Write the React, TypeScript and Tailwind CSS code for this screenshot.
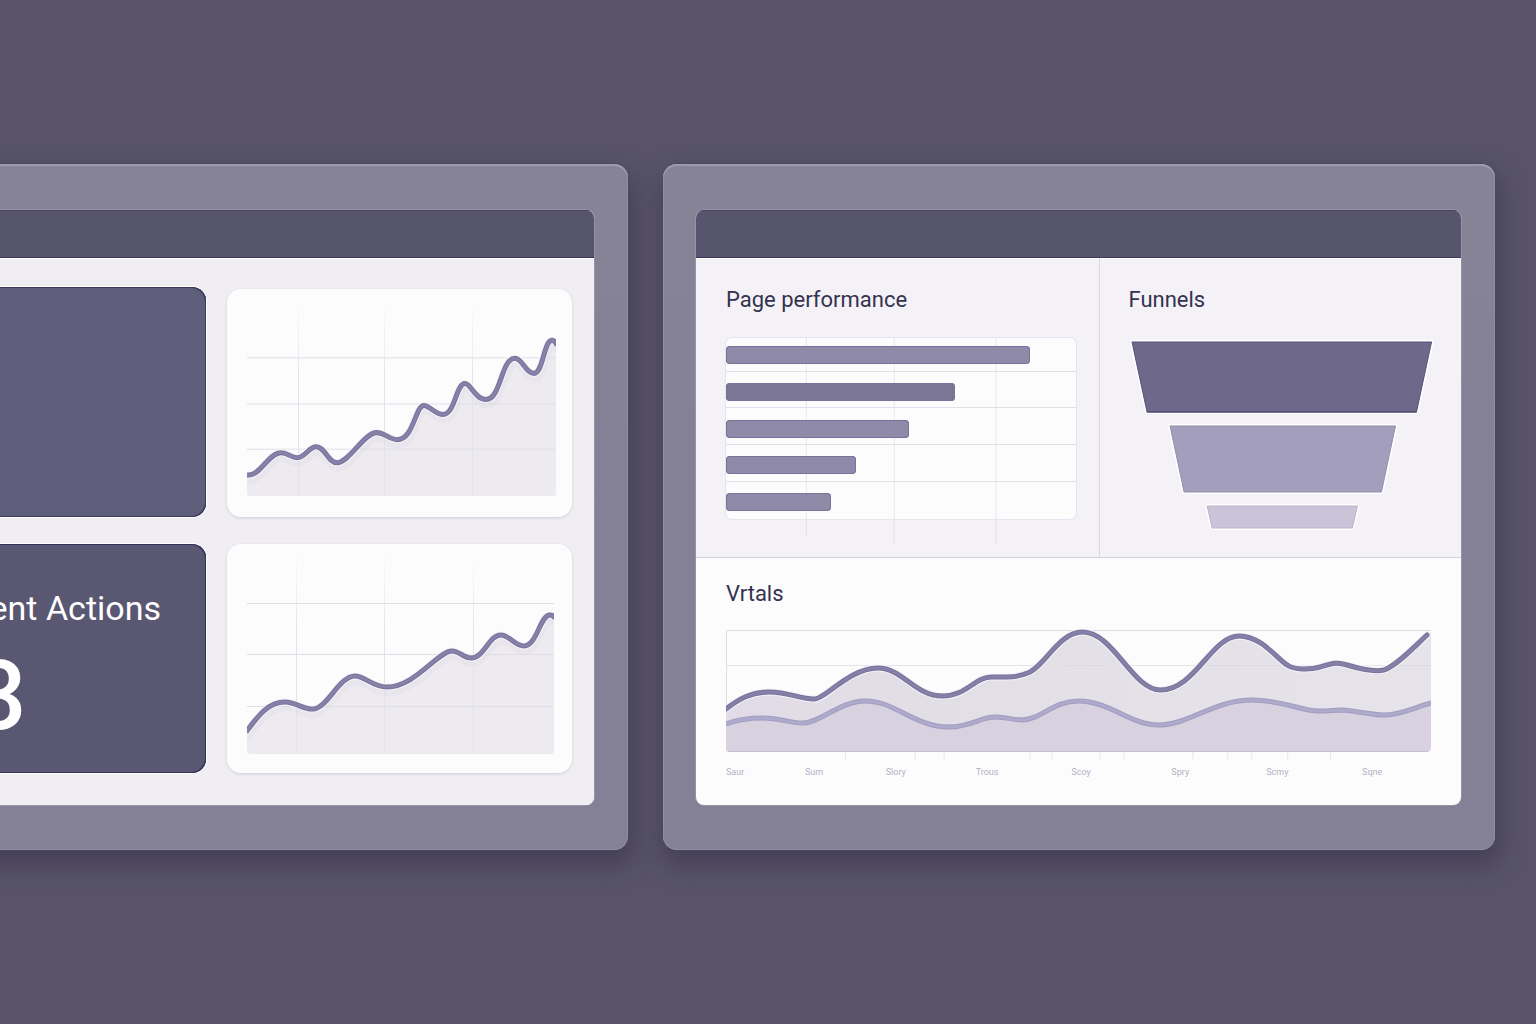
import type { ReactNode } from "react";

function Frame({ cut, children }: { cut?: boolean; children: ReactNode }) {
  return (
    <section
      className={
        (cut ? "-ml-10 rounded-r-[14px] pr-[34px] pl-10" : "rounded-[14px] pr-[34px] pl-[33px]") +
        " min-w-0 bg-linear-to-b from-[#878397] via-[#848095] to-[#848196] pt-[46px] pb-[45px] shadow-[inset_0_2px_1px_#9f9bae,inset_0_0_0_1px_#8f8ba2,0_0_0_1px_#4b475f,2px_12px_24px_2px_rgba(47,42,66,0.5)]"
      }
    >
      <div
        className={
          (cut ? "rounded-r-lg" : "rounded-lg") +
          " flex h-full flex-col overflow-hidden bg-[#fdfcfd] shadow-[0_0_0_1px_#9792aa]"
        }
      >
        <div className="h-12 shrink-0 border-t border-b border-t-[#47435f] border-b-[#3a365c] bg-[#57546d]" />
        {children}
      </div>
    </section>
  );
}

type TrendProps = {
  label: string;
  box: string;
  line: string;
  area: string;
  rows: number[];
  cols: number[];
  clip: { x: number; y: number; w: number; h: number };
};

function TrendCard({ label, box, line, area, rows, cols, clip }: TrendProps) {
  const id = label.replace(" ", "-");
  return (
    <div className="min-h-0 rounded-[14px] bg-[#fdfcfd] shadow-[0_1px_3px_rgba(80,70,110,0.18)]">
      <svg viewBox={box} preserveAspectRatio="none" className="block h-full w-full" role="img" aria-label={label}>
        <defs>
          <clipPath id={id}>
            <rect x={clip.x} y={clip.y} width={clip.w} height={clip.h} rx="3" />
          </clipPath>
          <linearGradient id={id + "-fade"} gradientUnits="userSpaceOnUse" x1="0" y1={clip.y} x2="0" y2={clip.y + 80}>
            <stop offset="0" stopColor="#e6e5ee" stopOpacity="0" />
            <stop offset="1" stopColor="#e3e2eb" />
          </linearGradient>
        </defs>
        <g clipPath={`url(#${id})`}>
          <path d={area} fill="#edeaf0" />
          {rows.map((y) => (
            <rect key={y} x={clip.x} y={y} width={clip.w} height="1" fill="#e0dfe9" />
          ))}
          {cols.map((x) => (
            <rect key={x} x={x} y={clip.y} width="1" height={clip.h} fill={`url(#${id}-fade)`} />
          ))}
          <path d={line} fill="none" stroke="#c9bfd2" strokeOpacity="0.1" strokeWidth="8" transform="translate(1 5)" />
          <path d={line} fill="none" stroke="#f6f4f8" strokeWidth="7" />
          <path d={line} fill="none" stroke="#78749c" strokeWidth="5" />
          <path d={line} fill="none" stroke="#8581a8" strokeWidth="3" />
        </g>
      </svg>
    </div>
  );
}

const LINE_A =
  "M246 475 C260 478 268 453 281 453 C288 453 291 458 297 458 C305 458 309 447 316 447 C325 447 328 463 337 463 C349 463 364 433 377 433 C384 433 390 440 397 440 C414 440 415 406 424 406 C429 406 436 415 443 415 C455 415 456 384 465 384 C471 384 475 400 486 400 C501 400 501 359 515 359 C522 359 526 374 534 374 C543 374 544 341 552 341 C555 341 555 343 557 346";
const LINE_B =
  "M245 732 C257 716 267 702 284 702 C295 702 303 710 312 709 C326 709 338 676 354 676 C364 676 371 687 386 687 C414 687 437 651 451 651 C458 651 463 658 470 658 C483 658 488 635 500 635 C508 635 514 646 523 646 C536 646 539 615 549 615 C552 615 552 616 554 618";

const BARS = [
  { width: 304, color: "bg-[#8e8aa8]" },
  { width: 229, color: "bg-[#7a7693]" },
  { width: 183, color: "bg-[#8e8aa8]" },
  { width: 130, color: "bg-[#8e8aa8]" },
  { width: 105, color: "bg-[#8e8aa8]" },
];

const UPPER =
  "M725 709 C738 699 750 692 768 692 C788 692 802 700 814 699 C824 699 849 668 877 668 C902 668 914 696 942 696 C966 696 974 677 991 677 C1003 677 1016 678 1027 673 C1044 667 1058 632 1082 632 C1113 632 1132 690 1160 690 C1195 690 1211 636 1239 636 C1261 636 1277 659 1287 665 C1294 670 1310 670 1320 667 C1334 663 1337 662 1347 665 C1360 669 1374 672 1384 670 C1396 666 1414 647 1427 635";
const LOWER =
  "M725 724 C738 719 749 718 762 718 C780 718 787 723 802 723 C820 723 838 701 865 701 C894 701 914 727 948 727 C971 727 979 717 995 717 C1007 717 1012 720 1021 720 C1040 720 1052 701 1078 701 C1109 701 1130 725 1158 725 C1189 725 1213 700 1252 700 C1283 700 1301 711 1318 711 C1330 711 1333 710 1342 710 C1356 711 1372 715 1384 715 C1400 715 1413 708 1431 703";

const TICKS = [844, 914, 943, 1029, 1051, 1099, 1123, 1192, 1227, 1251, 1287, 1330];
const LABELS = ["Saur", "Sum", "Slory", "Trous", "Scoy", "Spry", "Scmy", "Sqne"];

function Title({ children }: { children: ReactNode }) {
  return <h2 className="text-[22px] leading-8 text-[#343250]">{children}</h2>;
}

export default function App() {
  return (
    <main className="grid min-h-screen grid-cols-[628fr_832fr] content-start gap-[35px] overflow-hidden bg-[#585369] pt-[164px] pr-[41px] pb-20 font-['Roboto',sans-serif]">
      <Frame cut>
        <div className="grid grow grid-cols-[206fr_345fr] grid-rows-[230px_229px] gap-x-[21px] gap-y-[27px] bg-[#f0eef2] pt-[29px] pr-[22px] pb-8 shadow-[inset_0_1px_0_#ffffff]">
          <div className="rounded-r-[14px] bg-[#605f7b] shadow-[inset_-1px_1px_0_#3a385d,inset_-1px_-1px_0_#3a385d,0_0_0_1px_#ffffff]" />
          <div className="grid pt-0.5">
            <TrendCard
              label="trend one"
              box="227 290 345 227"
              line={LINE_A}
              area={LINE_A + " V500 H246 Z"}
              rows={[358, 404, 449]}
              cols={[298, 384, 472]}
              clip={{ x: 247, y: 298, w: 309, h: 198 }}
            />
          </div>
          <div className="flex min-w-0 flex-col items-end overflow-hidden rounded-r-[14px] bg-[#595771] pt-[38px] text-white shadow-[inset_-1px_1px_0_#34325a,inset_-1px_-1px_0_#34325a,0_0_0_1px_#ffffff]">
            <h2 className="pr-[45px] text-[34px] leading-[52px] whitespace-nowrap">ent Actions</h2>
            <p className="mr-auto -ml-7 text-[96px] leading-[124px] font-medium">3</p>
          </div>
          <TrendCard
            label="trend two"
            box="226 544 345 229"
            line={LINE_B}
            area={LINE_B + " V760 H245 Z"}
            rows={[603, 654, 706]}
            cols={[295, 383, 472]}
            clip={{ x: 246, y: 550, w: 307, h: 204 }}
          />
        </div>
      </Frame>

      <Frame>
        <div className="grid h-[300px] grid-cols-[405fr_361fr] border-b border-[#d3d1da] bg-[#f4f2f6] shadow-[inset_0_1px_0_#ffffff]">
          <div className="border-r border-[#d9d7df] pt-[26px] pr-[23px] pl-[30px]">
            <Title>Page performance</Title>
            <div className="relative mt-[22px] flex h-[181px] flex-col justify-between rounded-md bg-[#fdfcfd] py-2 shadow-[0_0_0_1px_#e6e4ee]">
              <svg viewBox="0 0 351 206" preserveAspectRatio="none" className="absolute inset-x-0 top-0 h-[206px] w-full" aria-hidden="true">
                <path d="M80.5 0V198M168.5 0V206M270.5 0V206" stroke="#d9d8e2" strokeOpacity="0.6" fill="none" />
                <path d="M0 33.5H351M0 69.5H351M0 106.5H351M0 143.5H351" stroke="#e2e1e9" fill="none" />
              </svg>
              {BARS.map((bar, i) => (
                <div
                  key={i}
                  className={bar.color + " relative h-[18px] rounded-[4px] shadow-[inset_0_0_0_1px_#77739a]"}
                  style={{ width: `${(bar.width / 351) * 100}%` }}
                />
              ))}
            </div>
          </div>
          <div className="px-[28px] pt-[26px]">
            <Title>Funnels</Title>
            <svg viewBox="1129 336 304 196" preserveAspectRatio="none" className="mt-5 block h-[196px] w-full" role="img" aria-label="Funnel stages">
              <g stroke="#ffffff" strokeWidth="4" strokeLinejoin="round">
                <path d="M1133 342H1432L1417 412H1148Z" />
                <path d="M1171 426H1396L1382 492H1185Z" />
                <path d="M1208 506H1358L1353 528H1213Z" />
              </g>
              <path d="M1133 342H1432L1417 412H1148Z" fill="#6e698a" stroke="#57527a" strokeLinejoin="round" />
              <path d="M1148 412H1417" stroke="#443f6b" />
              <path d="M1171 426H1396L1382 492H1185Z" fill="#a29ebc" stroke="#918dae" strokeLinejoin="round" />
              <path d="M1208 506H1358L1353 528H1213Z" fill="#cbc4d8" stroke="#b9b1ca" strokeLinejoin="round" />
            </svg>
          </div>
        </div>
        <div className="px-[30px] pt-5 pb-[25px]">
          <Title>Vrtals</Title>
          <svg viewBox="725 626 706 134" preserveAspectRatio="none" className="mt-4 block h-[134px] w-full" role="img" aria-label="Vrtals">
            <defs>
              <clipPath id="vrtals">
                <path d="M725 620H1431V747Q1431 752 1426 752H730Q725 752 725 747Z" />
              </clipPath>
              <linearGradient id="upper" gradientUnits="userSpaceOnUse" x1="725" y1="0" x2="1431" y2="0">
                <stop offset="0" stopColor="#e0dbe6" />
                <stop offset="0.35" stopColor="#e3dfe6" />
                <stop offset="1" stopColor="#e6e3ea" />
              </linearGradient>
            </defs>
            <path d="M725.5 752V630.5H1431" stroke="#dddbe5" fill="none" />
            <path d="M726 665.5H1431" stroke="#e6e5ec" fill="none" />
            {TICKS.map((x) => (
              <path key={x} d={`M${x}.5 752V759`} stroke="#e6e4eb" />
            ))}
            <g clipPath="url(#vrtals)" fill="none">
              <path d={UPPER + " L1431 632 V752 H725 Z"} fill="url(#upper)" />
              <path d="M1060 665.5H1105M1205 665.5H1285M1392 665.5H1431" stroke="#dbd9e2" />
              <path d={LOWER + " V752 H725 Z"} fill="#d8d2e0" />
              <path d="M725 751.5H1431" stroke="#c5bed2" />
              <path d={UPPER} stroke="#f5f3f7" strokeWidth="7" strokeLinecap="round" />
              <path d={UPPER} stroke="#77739b" strokeWidth="5" strokeLinecap="round" />
              <path d={UPPER} stroke="#8480a7" strokeWidth="3" strokeLinecap="round" />
              <path d={LOWER} stroke="#a19dc0" strokeWidth="5" />
              <path d={LOWER} stroke="#aeaacb" strokeWidth="3" />
            </g>
          </svg>
          <div className="mt-1 grid grid-cols-[79fr_81fr_90fr_96fr_100fr_95fr_96fr_69fr] text-[9px] leading-4 text-[#b5b0c6]">
            {LABELS.map((label) => (
              <span key={label}>{label}</span>
            ))}
          </div>
        </div>
      </Frame>
    </main>
  );
}
